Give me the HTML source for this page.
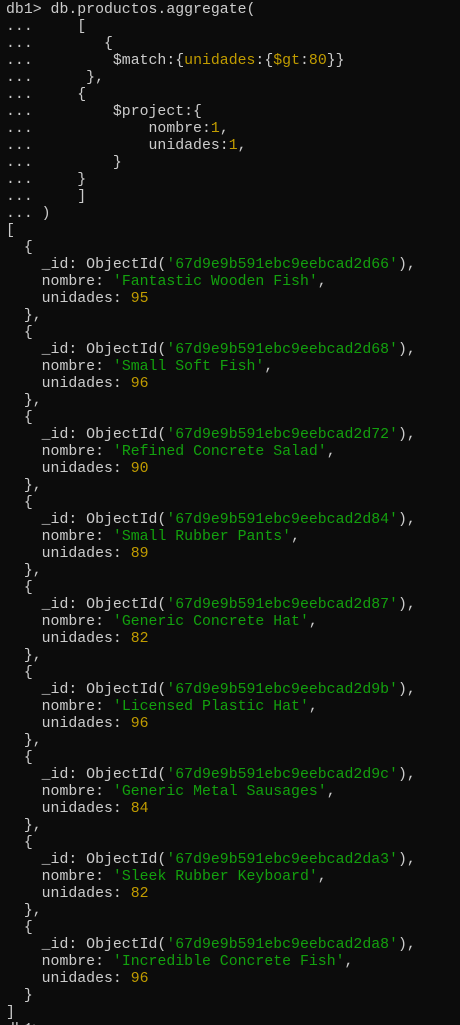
<!DOCTYPE html>
<html><head><meta charset="utf-8"><style>
html,body{margin:0;padding:0;background:#0c0c0c;width:460px;height:1025px;overflow:hidden}
pre{margin:0;padding:2px 0 0 6px;font-family:"Liberation Mono",monospace;font-size:14.85px;line-height:17px;color:#cccccc;white-space:pre}
.g{color:#13a10e}.y{color:#c19c00}
</style></head><body><pre>db1&gt; db.productos.aggregate(
...     [
...        {
...         $match:{<span class="y">unidades</span>:{<span class="y">$gt</span>:<span class="y">80</span>}}
...      },
...     {
...         $project:{
...             nombre:<span class="y">1</span>,
...             unidades:<span class="y">1</span>,
...         }
...     }
...     ]
... )
[
  {
    _id: ObjectId(<span class="g">'67d9e9b591ebc9eebcad2d66'</span>),
    nombre: <span class="g">'Fantastic Wooden Fish'</span>,
    unidades: <span class="y">95</span>
  },
  {
    _id: ObjectId(<span class="g">'67d9e9b591ebc9eebcad2d68'</span>),
    nombre: <span class="g">'Small Soft Fish'</span>,
    unidades: <span class="y">96</span>
  },
  {
    _id: ObjectId(<span class="g">'67d9e9b591ebc9eebcad2d72'</span>),
    nombre: <span class="g">'Refined Concrete Salad'</span>,
    unidades: <span class="y">90</span>
  },
  {
    _id: ObjectId(<span class="g">'67d9e9b591ebc9eebcad2d84'</span>),
    nombre: <span class="g">'Small Rubber Pants'</span>,
    unidades: <span class="y">89</span>
  },
  {
    _id: ObjectId(<span class="g">'67d9e9b591ebc9eebcad2d87'</span>),
    nombre: <span class="g">'Generic Concrete Hat'</span>,
    unidades: <span class="y">82</span>
  },
  {
    _id: ObjectId(<span class="g">'67d9e9b591ebc9eebcad2d9b'</span>),
    nombre: <span class="g">'Licensed Plastic Hat'</span>,
    unidades: <span class="y">96</span>
  },
  {
    _id: ObjectId(<span class="g">'67d9e9b591ebc9eebcad2d9c'</span>),
    nombre: <span class="g">'Generic Metal Sausages'</span>,
    unidades: <span class="y">84</span>
  },
  {
    _id: ObjectId(<span class="g">'67d9e9b591ebc9eebcad2da3'</span>),
    nombre: <span class="g">'Sleek Rubber Keyboard'</span>,
    unidades: <span class="y">82</span>
  },
  {
    _id: ObjectId(<span class="g">'67d9e9b591ebc9eebcad2da8'</span>),
    nombre: <span class="g">'Incredible Concrete Fish'</span>,
    unidades: <span class="y">96</span>
  }
]
db1&gt;</pre></body></html>
